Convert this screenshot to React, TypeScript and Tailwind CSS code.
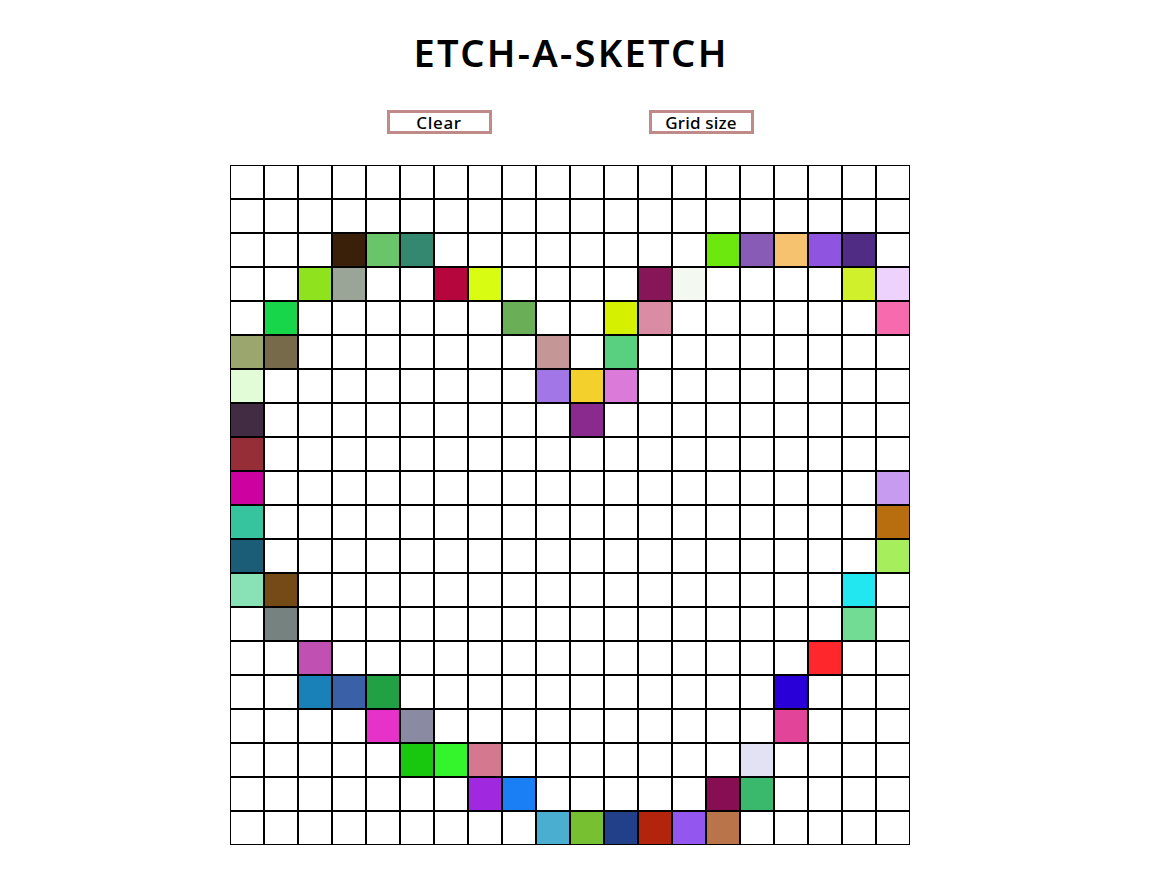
import React from "react";

const colored: Record<string, string> = {
  "2-3": "#3a2009", "2-4": "#6ac46a", "2-5": "#358870", "2-14": "#6de80e", "2-15": "#875bb6", "2-16": "#f7c270", "2-17": "#8f55e0", "2-18": "#502c84",
  "3-2": "#8ee31e", "3-3": "#9aa597", "3-6": "#b5063e", "3-7": "#d8fc12", "3-12": "#871658", "3-13": "#f3f8f0", "3-18": "#d0f02c", "3-19": "#ecd2fc",
  "4-1": "#17d64a", "4-8": "#6aae58", "4-11": "#d5f000", "4-12": "#d98ca4", "4-19": "#f56bae",
  "5-0": "#9ba56e", "5-1": "#776a4a", "5-9": "#c49695", "5-11": "#58d07f",
  "6-0": "#e2fcd8", "6-9": "#a276e6", "6-10": "#f4d02c", "6-11": "#dc7ada",
  "7-0": "#412c44", "7-10": "#8b2a8e",
  "8-0": "#952e36",
  "9-0": "#cc02a0", "9-19": "#c69bf0",
  "10-0": "#35c49e", "10-19": "#b86e0e",
  "11-0": "#1b5c76", "11-19": "#a6ee5c",
  "12-0": "#88e2b6", "12-1": "#744a16", "12-18": "#22e6f0",
  "13-1": "#75827f", "13-18": "#72dc94",
  "14-2": "#c050b2", "14-17": "#fe282c",
  "15-2": "#1a80b8", "15-3": "#3a60a8", "15-4": "#22a044", "15-16": "#2a00d8",
  "16-4": "#e632c8", "16-5": "#8a8aa2", "16-16": "#e2449a",
  "17-5": "#18c80e", "17-6": "#34f42c", "17-7": "#d47890", "17-15": "#e2e2f4",
  "18-7": "#a028de", "18-8": "#1a7ef4", "18-14": "#870e52", "18-15": "#3ab86c",
  "19-9": "#4aaed0", "19-10": "#76c032", "19-11": "#22408a", "19-12": "#b2240c", "19-13": "#9356ee", "19-14": "#ba744a",
};

export default function App() {
  const cells = [];
  for (let r = 0; r < 20; r++) {
    for (let c = 0; c < 20; c++) {
      const bg = colored[`${r}-${c}`] || "#ffffff";
      cells.push(
        <div
          key={`${r}-${c}`}
          className="w-[34px] h-[34px] border border-black box-border"
          style={{ backgroundColor: bg }}
        />
      );
    }
  }
  return (
    <div className="w-[1140px] min-h-[892px] bg-white flex flex-col items-center">
      <h1
        className="mt-[33px] text-[38px] leading-none font-semibold text-black tracking-[0.06em] pl-[0.06em]"
        style={{ fontFamily: '"Noto Sans", sans-serif' }}
      >
        ETCH-A-SKETCH
      </h1>
      <div className="mt-[39px] flex gap-[157px]" style={{ fontFamily: '"Noto Sans", sans-serif' }}>
        <button className="w-[105px] h-[24px] border-[3px] border-[#c08a88] bg-white text-[17px] leading-none font-medium text-black tracking-[0.04em] flex items-center justify-center">
          Clear
        </button>
        <button className="w-[105px] h-[24px] border-[3px] border-[#c08a88] bg-white text-[17px] leading-none font-medium text-black tracking-[0.01em] flex items-center justify-center">
          Grid size
        </button>
      </div>
      <div className="mt-[31px] grid grid-cols-[repeat(20,34px)]">{cells}</div>
    </div>
  );
}
